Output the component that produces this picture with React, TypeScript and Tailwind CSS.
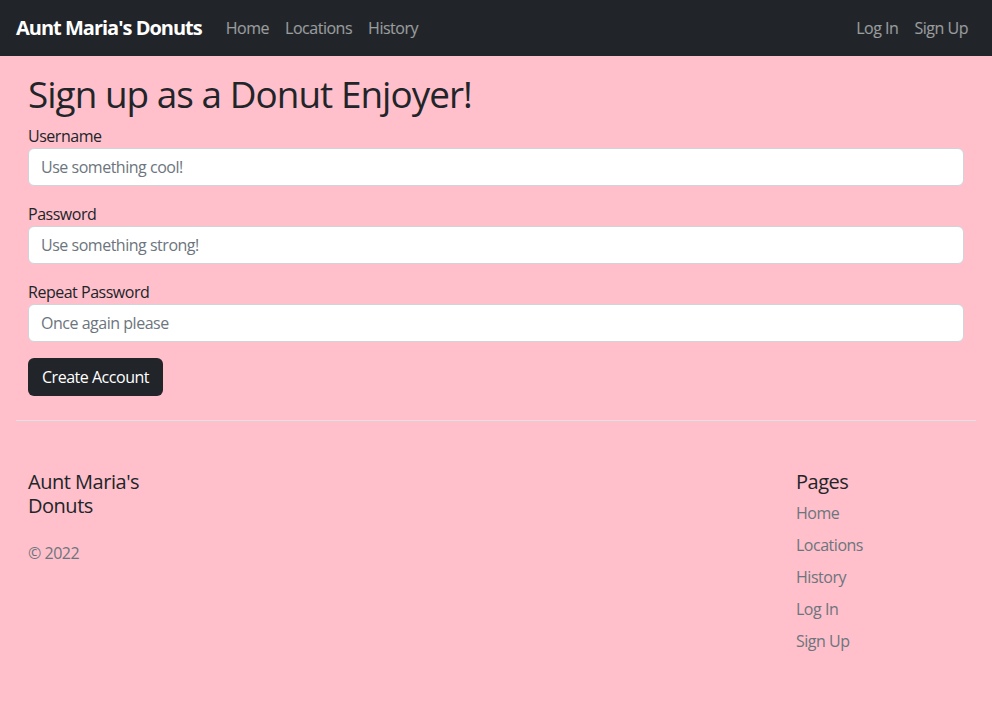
import { useState } from "react";

const navLinks = ["Home", "Locations", "History"];
const footerLinks = ["Home", "Locations", "History", "Log In", "Sign Up"];

const fields = [
  { label: "Username", placeholder: "Use something cool!", type: "text" },
  { label: "Password", placeholder: "Use something strong!", type: "password" },
  { label: "Repeat Password", placeholder: "Once again please", type: "password" },
];

export default function App() {
  const [values, setValues] = useState<Record<string, string>>({});

  return (
    <div className="min-h-screen bg-[#ffc0cb] text-[#212529] font-['Open_Sans',sans-serif] text-base leading-6 tracking-[-0.03em]">
      <nav className="h-14 bg-[#212529] flex items-center justify-between px-4">
        <div className="flex items-center">
          <a href="#" className="text-white font-bold text-xl leading-[30px] mr-4 tracking-[-0.05em]">
            Aunt Maria's Donuts
          </a>
          {navLinks.map((link) => (
            <a key={link} href="#" className="px-2 py-2 text-white/55">
              {link}
            </a>
          ))}
        </div>
        <div className="flex items-center">
          <a href="#" className="px-2 py-2 text-white/55">Log In</a>
          <a href="#" className="px-2 py-2 text-white/55">Sign Up</a>
        </div>
      </nav>

      <div className="mx-4">
        <main className="px-3 pt-4">
          <h1 className="text-[36.88px] leading-[44.3px] font-normal mb-2 tracking-[-0.026em]">Sign up as a Donut Enjoyer!</h1>
          <form onSubmit={(e) => e.preventDefault()}>
            {fields.map((f) => (
              <div key={f.label} className="mb-4">
                <label className="block">{f.label}</label>
                <input
                  type={f.type}
                  placeholder={f.placeholder}
                  value={values[f.label] ?? ""}
                  onChange={(e) => setValues({ ...values, [f.label]: e.target.value })}
                  className="block w-full h-[38px] px-3 bg-white border border-[#ced4da] rounded-md placeholder:text-[#6c757d] outline-none"
                />
              </div>
            ))}
            <button className="h-[38px] px-[14px] bg-[#212529] text-white rounded-md">Create Account</button>
          </form>
        </main>

        <footer className="mt-6 border-t border-[#dee2e6] py-12 grid grid-cols-5">
          <div className="px-3">
            <p className="text-xl leading-6 pt-px">Aunt Maria's Donuts</p>
            <p className="mt-[23px] text-[#6c757d]">© 2022</p>
          </div>
          <div />
          <div />
          <div />
          <div className="px-3">
            <h5 className="text-xl leading-6 mb-[7px] pt-px">Pages</h5>
            <ul>
              {footerLinks.map((link) => (
                <li key={link} className="mb-2">
                  <a href="#" className="text-[#6c757d]">{link}</a>
                </li>
              ))}
            </ul>
          </div>
        </footer>
      </div>
    </div>
  );
}
